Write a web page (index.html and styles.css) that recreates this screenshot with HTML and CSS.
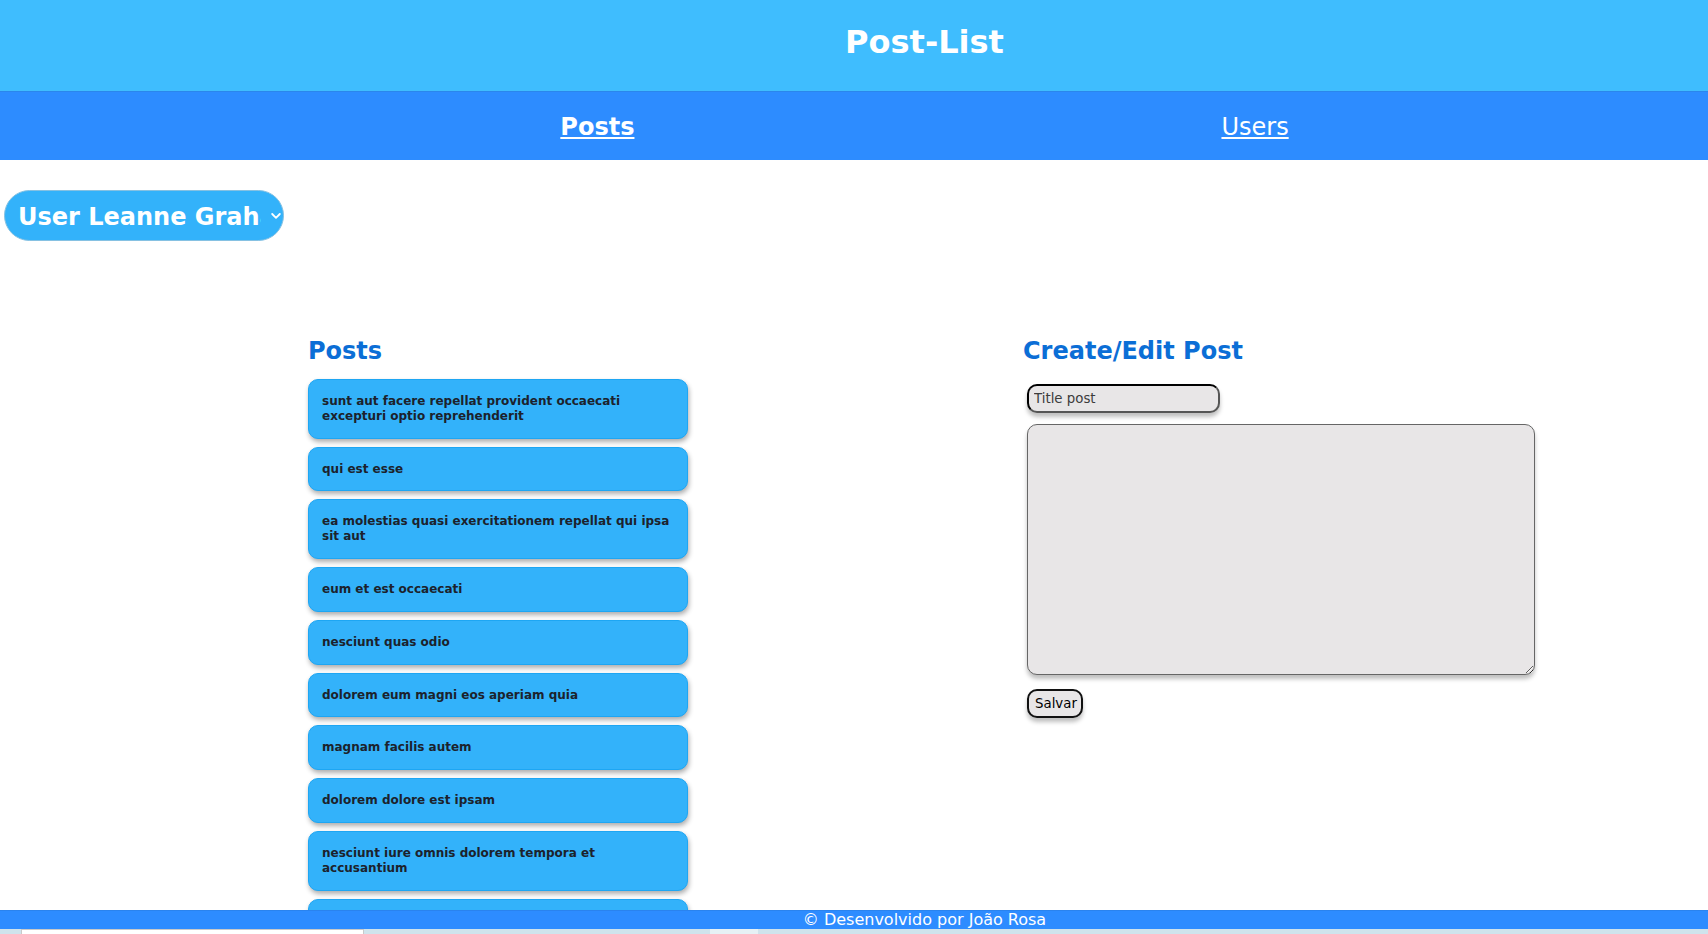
FILE: index.html
```html
<!DOCTYPE html>
<html lang="pt">
<head>
<meta charset="utf-8">
<title>Post-List</title>
<link rel="stylesheet" href="styles.css">
</head>
<body>
<header class="site-header">
  <h1 class="site-title">Post-List</h1>
</header>
<nav class="site-nav">
  <a class="nav-link nav-link-active" href="#">Posts</a>
  <a class="nav-link" href="#">Users</a>
</nav>
<div class="toolbar">
  <div class="user-select">
    <span class="user-select-text">User Leanne Graham</span>
    <svg class="user-select-arrow" width="10" height="6" viewBox="0 0 10 6"><polyline points="1.2,1 5,4.8 8.8,1" fill="none" stroke="#fff" stroke-width="1.8" stroke-linecap="round" stroke-linejoin="round"/></svg>
  </div>
</div>
<main class="content">
  <section class="posts-col">
    <h2 class="section-title">Posts</h2>
    <ul class="post-list">
      <li class="post-card">sunt aut facere repellat provident occaecati excepturi optio reprehenderit</li>
      <li class="post-card">qui est esse</li>
      <li class="post-card">ea molestias quasi exercitationem repellat qui ipsa sit aut</li>
      <li class="post-card">eum et est occaecati</li>
      <li class="post-card">nesciunt quas odio</li>
      <li class="post-card">dolorem eum magni eos aperiam quia</li>
      <li class="post-card">magnam facilis autem</li>
      <li class="post-card">dolorem dolore est ipsam</li>
      <li class="post-card">nesciunt iure omnis dolorem tempora et accusantium</li>
      <li class="post-card">optio molestias id quia eum</li>
    </ul>
  </section>
  <section class="editor-col">
    <h2 class="section-title">Create/Edit Post</h2>
    <form class="post-form">
      <input class="title-input" type="text" placeholder="Title post">
      <textarea class="body-input"></textarea>
      <button class="save-btn" type="button">Salvar</button>
    </form>
  </section>
</main>
<footer class="site-footer">
  <p class="footer-text">© Desenvolvido por João Rosa</p>
</footer>
<div class="bottom-strip">
  <span class="strip-box strip-box-a"></span>
  <span class="strip-box strip-box-b"></span>
</div>
</body>
</html>
```

FILE: styles.css
```css
html, body {
  margin: 0;
  padding: 0;
  background: #ffffff;
  font-family: "DejaVu Sans", Verdana, sans-serif;
}

.site-header {
  background: #3fbdfe;
  padding: 24px 0 30px 141px;
  text-align: center;
}

.site-title {
  margin: 0;
  font-size: 32px;
  font-weight: bold;
  line-height: 37px;
  color: #ffffff;
}

.site-nav {
  background: #2d8cff;
  border-top: 1px solid #2b86ec;
  height: 68px;
  box-sizing: content-box;
  display: flex;
  justify-content: center;
  align-items: flex-start;
  gap: 587px;
  padding: 0 0 0 141px;
}

.nav-link {
  color: #ffffff;
  font-size: 24px;
  line-height: 28px;
  margin-top: 21px;
  text-decoration: underline;
  text-underline-offset: 2px;
}

.nav-link-active {
  font-weight: bold;
}

.toolbar {
  padding: 30px 0 0 4px;
}

.user-select {
  width: 280px;
  height: 51px;
  box-sizing: border-box;
  border: 1px solid #86c1e2;
  border-radius: 26px;
  background: #33b2fa;
  display: flex;
  align-items: center;
  padding: 3px 0 0 13px;
}

.user-select-text {
  display: block;
  width: 243px;
  overflow: hidden;
  white-space: nowrap;
  color: #ffffff;
  font-size: 24px;
  font-weight: bold;
  line-height: 28px;
}

.user-select-arrow {
  margin-left: 10px;
  margin-top: -2px;
}

.content {
  display: flex;
  align-items: flex-start;
  gap: 335px;
  padding: 96px 0 0 308px;
}

.posts-col {
  width: 380px;
}

.section-title {
  margin: 0 0 14px;
  font-size: 24px;
  line-height: 28px;
  font-weight: bold;
  color: #0b6ed6;
}

.post-list {
  list-style: none;
  margin: 0;
  padding: 0 0 40px;
  display: flex;
  flex-direction: column;
  gap: 8px;
}

.post-card {
  background: #33b2fa;
  border: 1px solid #1ea6f3;
  border-radius: 10px;
  padding: 14px 12px 14px 13px;
  font-size: 12px;
  font-weight: bold;
  line-height: 14.8px;
  color: #1c222c;
  box-shadow: 1px 3px 5px rgba(0, 0, 0, 0.32);
}

.editor-col {
  width: 520px;
}

.post-form {
  margin: 19px 0 0;
  padding-left: 4px;
  display: flex;
  flex-direction: column;
  align-items: flex-start;
}

.title-input {
  width: 193px;
  height: 29px;
  box-sizing: border-box;
  border: 2px solid;
  border-color: #000000 #555555 #555555 #000000;
  border-radius: 10px;
  background: #e8e6e7;
  padding: 0 5px;
  font-family: "DejaVu Sans", Verdana, sans-serif;
  font-size: 13.33px;
  color: #222;
  box-shadow: 0 4px 4px rgba(0, 0, 0, 0.25);
  outline: none;
}

.title-input::placeholder {
  color: #3c3c3c;
}

.body-input {
  width: 508px;
  height: 251px;
  box-sizing: border-box;
  margin-top: 11px;
  border: 1px solid #666666;
  border-radius: 10px;
  background: #e8e6e7;
  font-family: "DejaVu Sans", Verdana, sans-serif;
  font-size: 13.33px;
  box-shadow: 0 4px 4px rgba(0, 0, 0, 0.25);
  outline: none;
}

.save-btn {
  margin-top: 14px;
  height: 29px;
  box-sizing: border-box;
  padding: 0 4px 0 6px;
  border: 2px solid #111111;
  border-radius: 10px;
  background: #e8e6e7;
  font-family: "DejaVu Sans", Verdana, sans-serif;
  font-size: 13.33px;
  color: #000000;
  box-shadow: 0 4px 4px rgba(0, 0, 0, 0.25);
}

.site-footer {
  position: fixed;
  left: 0;
  right: 0;
  bottom: 5px;
  background: #2d8cff;
  border-top: 1px solid #2a83ee;
}

.footer-text {
  margin: 0;
  padding-left: 141px;
  text-align: center;
  font-size: 16px;
  line-height: 18px;
  color: #ffffff;
}

.bottom-strip {
  position: fixed;
  left: 0;
  right: 0;
  bottom: 0;
  height: 5px;
  background: #cfe3ec;
  display: flex;
}

.strip-box {
  display: block;
  height: 5px;
}

.strip-box-a {
  width: 343px;
  margin-left: 21px;
  background: #ffffff;
  box-sizing: border-box;
  border: 1px solid #c9c9c9;
  border-bottom: none;
}

.strip-box-b {
  width: 48px;
  margin-left: 346px;
  background: #e6f1f5;
}
```
